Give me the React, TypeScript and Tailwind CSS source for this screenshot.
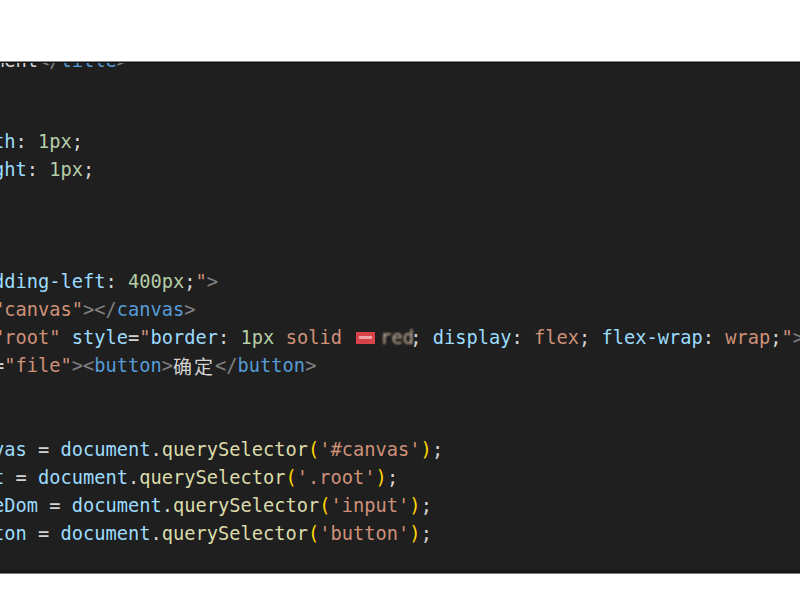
type Kind = "t" | "p" | "tag" | "prop" | "num" | "str" | "fn" | "br" | "swatch" | "blur" | "cjk";
type Seg = [string, Kind];

// VS Code Dark+ token colours
const tone: Record<Kind, string> = {
  t: "text-[#d4d4d4]",
  p: "text-[#808080]",
  tag: "text-[#569cd6]",
  prop: "text-[#9cdcfe]",
  num: "text-[#b5cea8]",
  str: "text-[#ce9178]",
  fn: "text-[#dcdcaa]",
  br: "text-[#ffd700]",
  swatch: "",
  blur: "text-[#c9b39a]",
  cjk: "text-[#d4d4d4]",
};

const query = (name: string, sel: string): Seg[] => [
  [name, "prop"],
  [" = ", "t"],
  ["document", "prop"],
  [".", "t"],
  ["querySelector", "fn"],
  ["(", "br"],
  [`'${sel}'`, "str"],
  [")", "br"],
  [";", "t"],
];

const lines: Seg[][] = [
  [["ment", "t"], ["</", "p"], ["title", "tag"], [">", "p"]],
  [],
  [],
  [["th", "prop"], [": ", "t"], ["1px", "num"], [";", "t"]],
  [["ght", "prop"], [": ", "t"], ["1px", "num"], [";", "t"]],
  [],
  [],
  [],
  [["dding-left", "prop"], [": ", "t"], ["400px", "num"], [";", "t"], ['"', "str"], [">", "p"]],
  [['"canvas"', "str"], ["></", "p"], ["canvas", "tag"], [">", "p"]],
  [
    ['"root"', "str"], [" ", "t"], ["style", "prop"], ["=", "t"], ['"', "str"],
    ["border", "prop"], [": ", "t"], ["1px", "num"], [" ", "t"], ["solid", "str"], [" ", "t"],
    ["", "swatch"], ["red", "blur"], ["; ", "t"],
    ["display", "prop"], [": ", "t"], ["flex", "str"], ["; ", "t"],
    ["flex-wrap", "prop"], [": ", "t"], ["wrap", "str"], [";", "t"], ['"', "str"], [">", "p"],
  ],
  [["=", "t"], ['"file"', "str"], ["><", "p"], ["button", "tag"], [">", "p"], ["确定", "cjk"], ["</", "p"], ["button", "tag"], [">", "p"]],
  [],
  [],
  query("vas", "#canvas"),
  query("t", ".root"),
  query("eDom", "input"),
  query("ton", "button"),
  [],
];

function Token({ text, kind }: { text: string; kind: Kind }) {
  if (kind === "swatch") {
    return (
      <span className="shrink-0 ml-[3px] w-[19px] h-[12px] bg-[#d8434a] flex items-center px-[3px]">
        <span className="w-full h-[3px] bg-[#f2a3a3]" />
      </span>
    );
  }
  if (kind === "blur") {
    return <span className={`shrink-0 w-[35px] pl-[5px] blur-[1.2px] ${tone.blur}`}>{text}</span>;
  }
  if (kind === "cjk") {
    return (
      <span className={`shrink-0 text-[19px] tracking-[2px] ${tone.cjk}`} style={{ fontFamily: '"Noto Sans CJK SC", sans-serif' }}>
        {text}
      </span>
    );
  }
  return <span className={`shrink-0 ${tone[kind]}`}>{text}</span>;
}

export default function App() {
  return (
    <div className="w-[800px] h-[600px] bg-white flex flex-col overflow-hidden">
      {/* white strip above the editor */}
      <div className="h-[61px] shrink-0 bg-white" />
      <div className="h-px shrink-0 bg-[#8a8a8a]" />
      <div className="h-px shrink-0 bg-[#111111]" />

      {/* editor */}
      <div
        className="h-[507px] shrink-0 bg-[#1f1f1f] overflow-hidden text-[18.7px] leading-[28px] whitespace-pre"
        style={{ fontFamily: '"DejaVu Sans Mono", "Liberation Mono", monospace' }}
      >
        <div className="-mt-[19.5px] -ml-[7px] flex flex-col">
          {lines.map((segs, i) => (
            <div key={i} className={`h-[28px] flex items-center ${i === 0 ? "translate-y-[3px]" : ""}`}>
              {segs.map(([text, kind], j) => (
                <Token key={j} text={text} kind={kind} />
              ))}
            </div>
          ))}
        </div>
      </div>

      <div className="h-[3px] shrink-0 bg-[#151515]" />
      <div className="h-px shrink-0 bg-[#7a7a7a]" />
      <div className="flex-1 bg-white" />
    </div>
  );
}
